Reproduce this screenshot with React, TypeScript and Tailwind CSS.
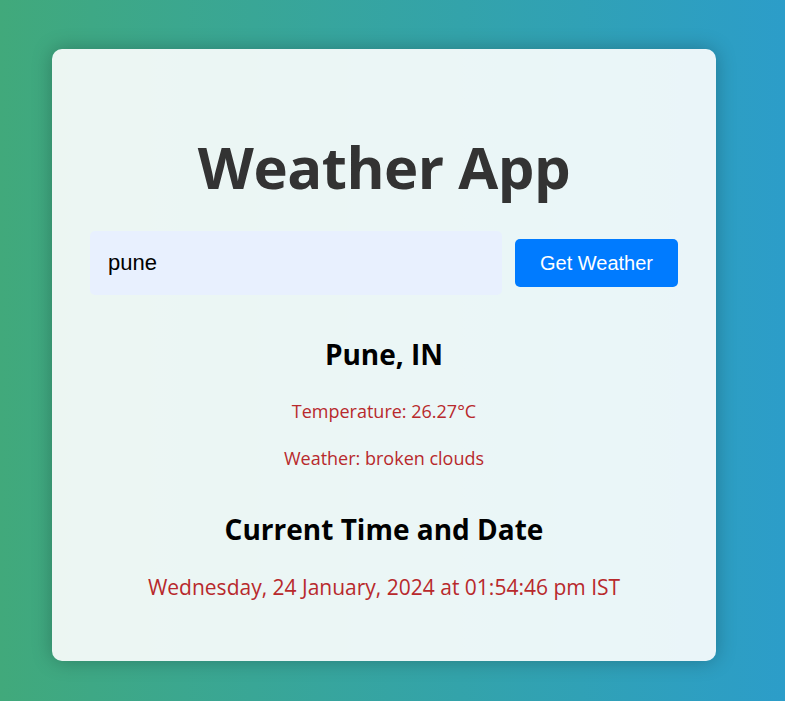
export default function App() {
  return (
    <div
      className="flex min-h-[701px] w-full items-start justify-center bg-gradient-to-r from-[#41a97b] to-[#2c9dc9] pr-[17px] pt-[49px]"
      style={{ fontFamily: '"Open Sans", "Noto Sans", sans-serif' }}
    >
      <div className="flex h-[612px] w-[664px] flex-col items-center rounded-[10px] bg-white/90 px-[38px] shadow-[0_0_20px_rgba(0,0,0,0.25)]">
        <h1 className="mt-[78px] text-[58px] font-bold leading-[80px] tracking-[-0.5px] text-[#333]">
          Weather App
        </h1>
        <form
          className="mt-[24px] flex w-full items-center gap-[13px]"
          onSubmit={(e) => e.preventDefault()}
        >
          <input
            className="h-[64px] flex-1 rounded-[5px] bg-[#e8f0fe] px-[18px] text-[22px] text-black outline-none"
            style={{ fontFamily: '"Liberation Sans", Arial, sans-serif' }}
            defaultValue="pune"
          />
          <button
            type="submit"
            className="h-[48px] w-[163px] rounded-[5px] bg-[#007bff] text-[20px] text-white"
            style={{ fontFamily: '"Liberation Sans", Arial, sans-serif' }}
          >
            Get Weather
          </button>
        </form>

        <h2 className="mt-[40px] text-[28px] font-bold leading-[38px] text-black">
          Pune, IN
        </h2>
        <p className="mt-[26px] text-[18px] leading-[24px] text-[#b8292c]">
          Temperature: 26.27°C
        </p>
        <p className="mt-[23px] text-[18px] leading-[24px] text-[#b8292c]">
          Weather: broken clouds
        </p>

        <h2 className="mt-[40px] text-[28px] font-bold leading-[38px] text-black">
          Current Time and Date
        </h2>
        <p className="mt-[25px] text-[21px] leading-[28px] text-[#b8292c]">
          Wednesday, 24 January, 2024 at 01:54:46 pm IST
        </p>
      </div>
    </div>
  );
}
